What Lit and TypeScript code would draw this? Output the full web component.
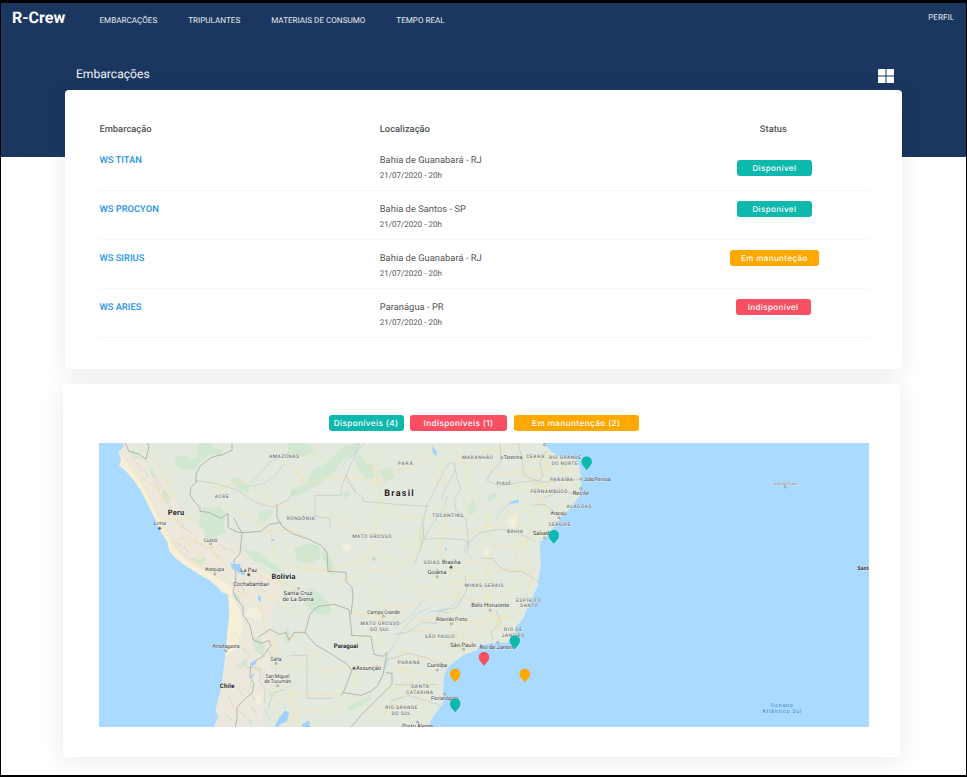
import { LitElement, html, svg, css } from "lit";
import { customElement } from "lit/decorators.js";

type Tone = "ok" | "warn" | "bad";

const NAV = ["EMBARCAÇÕES", "TRIPULANTES", "MATERIAIS DE CONSUMO", "TEMPO REAL"];

const SHIPS: { name: string; place: string; status: string; tone: Tone }[] = [
  { name: "WS TITAN", place: "Bahia de Guanabará - RJ", status: "Disponível", tone: "ok" },
  { name: "WS PROCYON", place: "Bahia de Santos - SP", status: "Disponível", tone: "ok" },
  { name: "WS SIRIUS", place: "Bahia de Guanabará - RJ", status: "Em manunteção", tone: "warn" },
  { name: "WS ARIES", place: "Paranágua - PR", status: "Indisponível", tone: "bad" },
];

const LAND =
  "M122.3 442L124.3 446L118.3 451.7L121 458.3L119.3 465L126.7 471.7L134.3 480.7L141.7 491.7L150 508.3L156.7 521.7L160 530L167.7 541.7L169 550L175 557.3L185 565L198.3 573.3L210 580L218 587L222 592L228.3 594L229.3 615L226.7 638L225.7 651.7L223.3 671.7L221 688.3L217.7 700L215.7 710L218.3 716.7L213.3 728H427.3L433.3 716.7L441.7 705L444.3 698.3L443.5 690L444 676.7L448.3 666.7L455 661L463.3 655L470 652.5L476.7 650L480 645L494 642.5L506.7 642.3L515 635L516 626.7L523.3 618.3L530 601.7L538.3 585L538.3 581.7L541 565L540 541.7L545 538.3L551.7 530L560 518.3L570 508.3L580 495L581.7 483.3L580 468.3L576.7 457.7L561.7 456.7L551.7 451.7L543.3 442Z";

const ANDES =
  "M118 442H127L139 458L156 472L170 490L178 505L187 520L202 530L222 537L238 546L244 560L262 570L278 581L284 592L273 606L270 622L276 640L270 660L274 680L262 700L264 728H200V580L150 560L110 470Z";

const COAST_STRIP =
  "M120 453L121 459L119.3 465L126.7 471.7L134.3 480.7L141.7 491.7L150 508.3L160 530L167.7 541.7L169 550L175 557.3L198.3 573.3L218 587L228.3 594L229.3 615L226.7 638L225.7 655L234 650L240 640L243 622L238 606L234 590L222 580L203 569L184 559L175 546L168 532L160 518L151 501L142 482L130 466Z";

const FORESTS = [
  "M175 457l10-3 6 5 8-4 3 6-7 8-12 1-8-6z",
  "M198 442l12 0 4 6 9 1-3 6-10-1-6 5-8-6z",
  "M203 506l9 3 7-4 6 7-1 12 2 8-8 3-4 5-9-3-1-8-6-5z",
  "M165 489l4 6 1 9-5-2-4-6z",
  "M240 545l8 5 10 2 10 8 8 4 6 8-8-1-9-7-10-3-7-7z",
  "M230 478l8-2 5 6 8 2-3 8-7-2-6-4z",
  "M260 512l9-4 5 4-8 8-8 2z",
  "M288 442l22 2 4 7-12 5-14-4z",
  "M290 490l14-6 9-14 14-8 17-16 15-4-2 9-14 8-8 12-18 14-16 9-10 2z",
  "M354 457l6-4 5 9 8 2 2 12-8 3-7-7z",
  "M379 470l12-4 4 10-10 6z",
  "M294 548l13-5 12 2 1 13-10 5-13-2z",
  "M325 545l3 8 5 9 0 12-4-2-4-10-4-8z",
  "M309 587l11 6 8 9 4 10-10 3-9-5-10-6z",
  "M346 707l17-8 9-6-2 6-11 8-10 4z",
  "M421 520l3 3 0 16-4 6-1-9z",
  "M468 505l5-6 4 8-5 8-5-3z",
  "M487 496l8-4 3 4-9 7z",
  "M233 591l6 5 2 8-5-3-4-5z",
  "M252 637l8 1 5 7-1 11-7-3-4-8z",
  "M239 664l6-6 2 7-5 3z",
  "M284 641l2-14 4 4-1 10z",
  "M248 718l6 3-4 6z",
  "M152 466l4 10-3 2-4-7z",
  "M196 562l8-6 3 3-6 7z",
  "M250 680l3 5-3 4z",
  "M340 495l8-5 4 3-6 5z",
  "M130 452l8 2 2 5-7-2z",
];

const ARID = [
  "M247 610l8-3 6 4 0 6-8 1-8-3z",
  "M508 518l7-4 4 6-5 8-6-3z",
  "M256 694l5-1 1 9-6 1z",
  "M341 545l8-3 3 4-6 6z",
  "M486 546l4 4-3 7-4-5z",
];

const LAKES = [
  "M230 562l5 2 5-1 1 6 5 4-3 2-6-4-5-3z",
  "M258 594l3 3 0 5-3-3z",
  "M252 661l5-2-1 4-4 3z",
  "M251 675l4-3-3 6z",
  "M275 725l5-9 5-6 4 2-2 9-7 3-3 4z",
  "M432 445l4 5 1 5-4-2z",
  "M508 503l6-3 5-1 0 3-6 1z",
  "M271 538l4 1-3 2z",
  "M372 557l4 1-2 3z",
  "M445 546l2 3-2 2z",
  "M302 724l7-4 1 7-8 1z",
];

const RIVERS = [
  "M342 466l6-8 7-4 10-12M345 480l8 6 3 8",
  "M447 496l-3 12-8 10-12 20M455 470l-10 20-4 10",
  "M385 670l4-17 10-18 10-13 10-10 12-5",
  "M252 486l12-3 12-8 8-12M290 452l-20 10-18 20",
  "M514 501l-12 8-6 10M468 540l-4 10 8 8",
  "M428 612l20-4 15-11M395 628l16-13 12-14",
];

const NATIONAL = [
  "M125 442l4 9 9 2 8 6 3-13-2-4",
  "M232 442v8l-9 4-12 3-11 9-4 8 0 8-5 5-1 7 5 8 5 5 0 4 9 1 12 6 7-5 0 14 10 5h9l14-1 8-7 12-2",
  "M234 518l8 15-2 20-6 7 2 15-1 9-2 7 4 8 6 7 0 8 7 11 3 14 8 4 8-3 2 5-8 11-12 7-1 13 4 8-2 9-8 6-7 8 0 12-4 16",
  "M258 637l12-8 10 5 6-2 3 8 5-8 11 0",
  "M277 505l0 12 5 9 10 7 17 6 12 6 6 7 1 19 18 1 0 9 6 6 1 10-2 17",
  "M305 632l5-18 8-8 16-2 15 5 3 26",
  "M351 635l20 1 3 18 9 2 4-4-4 22-5 11-7 6-10 4-18-3",
  "M305 632l10 12 17 10 14 9 6 7-5 13-4 10-2 2",
  "M386 672l6 1 0 11-10 10-9 9-12 12-10 12",
];

const STATES = [
  "M195 480l21 3 22 7 18 12 16 5 15-7 8-10",
  "M346 475l-4 11-1 9-13 0h-13v21l15 2 0 10",
  "M346 475l7 14 10 8 0 4 35 3 29 2",
  "M346 475l14-32",
  "M427 505l10-20 7-15 6-8 6 1",
  "M454 463l3 15 4 10-7 12 2 10 10 9 2 14 0 14",
  "M425 539l16-1 20 1 8 2M427 505l-4 17 1 16-6 17-3 8",
  "M467 550l4-10 9-8 20-3 15 2 21 10",
  "M500 442l1 20-9 8-5 10 12 6 20-4 18-2",
  "M518 443l4 14 2 18 18 7 20-2 18-1",
  "M547 450l-7 12 3 14-8 8M545 497l16-6 19 3M533 505l11-1 17 12",
  "M481 558l12 0 6 8 10 5 13 0 17 11",
  "M395 634l15-3 12-9 14 1 4-12 10 2",
  "M386 660l22-7 21 5 14 10M395 684l24 1 18-1",
  "M390 701l18-6 22 6 10 4",
  "M496 610l5 12-10 10 2 8M437 611l20-4 10-18-2-13",
  "M246 667l8 0 8 3-3 10 6 8 0 14M268 708l5-15 12-4M290 655l17 0v43l25 0",
];

const HIGHWAYS = [
  "M134 459l9 19 17 14 11 19 10 18 8 16 18 18 16 11 8 9M128 465l15 19 12 23 9 21 11 19 18 14 24 16",
  "M140 449l16 11 10 19 6 21M149 483l12 4 12-5M156 502l18-7M163 518l14 2 15-2M174 538l21 2 14 6 14 16",
  "M210 543l7 14 13 12M203 550l-5 12M190 546l9-12",
  "M221 489l19-8 17 8 18 15 20 2M209 482l11 8 9 19",
  "M238 512l18 9 14 10 4 24 10 10 23 4 17 2 24-7",
  "M270 531l20-2 19 9M246 572l12 2 13 7 17 3 12 8 8 14",
  "M248 573l6 14 9 8 12 4 18 14M236 590l17 9 10 13 1 14 9 12 3 30-2 20 5 28",
  "M224 640l12-8 6 12 11 10 7 14-13 11M221 690l16-7 10 8M226 704l11 7-6 11",
  "M276 668l16-7 14 6 13-9M278 682l12 7 2 17 9 21M279 700l20-8 22 3 23-3M286 722l21-13 20 4 19-12",
  "M294 470l12 14 28-8 13 2 19 1 12 5 12-12 24-6 16-14",
  "M360 455l17 18 5 30-4 16-4 28-16 10M378 484l-2-18 8-15M330 512l25 16 18 9",
  "M350 563l17-5 17-2 16 8 15-9 8-13-2-17M355 578l18-9 20 3 17 14 15 3",
  "M434 445l4 19 7 17-2 18 4 17-7 19 1 19 10 15M441 535l17-8 12 10 11-11 17 2 9-17",
  "M450 442l9 15 15 3 12-11 15 2 13-8M461 457l7 21-5 18 5 19M487 451l3 18 15 6 9-5 17 5 15-10",
  "M522 457l16 3 16-4 13 8M525 467l11 5 13-5 13 4 14-2M526 476l15 11 17-7 19 1M510 482l15 8 18-3 20 5 15 2",
  "M544 453l4 14-7 13 5 10-4 11 6 14M560 458l3 17-4 17M532 482l5 16 10 15 7 12",
  "M523 499l8 18 9 9 4 12M507 508l11 14 16 11 9 9M489 509l-3 21 8 14 16 3 20-8",
  "M518 521l3 22-6 13 5 18-7 14-8 17-10 10M528 538l-3 18 7 14-4 22-13 22",
  "M485 546l6 12-5 13 7 13-3 15M466 560l12 2 11 10 20-4 22 5",
  "M452 566l-2 13 9 11-3 13 5 19-4 13 4 15M452 570l16 5 12 9 8 16 3 16 13 13",
  "M437 569l-5 13-10 12-8 11-12 2-10 14M443 585l16-3 15-7M427 594l18 4 13-3 13 5 18-2 13-7",
  "M385 604l13 4 11 10 16 3 12-4 12 7 14-5 18 5 12-7 14-1M367 584l14 13 4 13-8 17-16 9",
  "M384 614l-21 1-15-6M384 614l-6 19 7 21M402 623l13 9 11-3 14 12 20 7",
  "M446 619l8 12 8 20M469 616l-6 18 3 14M481 610l-3 18-14 19M492 611l9 16 3 14M512 615l-15 7-11 15",
  "M391 658l16-8 10 8 13-3 15 10M390 673l15-5 15 8 17-7M401 650l2 19 11 13 1 14 11 12",
  "M387 690l13-5 15 5 12-8 15 5M392 704l19 3 12 8M371 706l15 4 14-4 12 16M381 722l7-16 17-13",
  "M355 668l13-5 15 3M352 673l2 12M319 673l22-5 9 0M303 646l16 8M305 632l-17 8",
  "M304 552l7 16 17 3M291 450l17 8 13-12M306 484l-9-14-14-10",
  "M336 584l14-6M433 482l11-5M406 545l19-5M408 515l16 4M391 503l9 13 9 3",
];

const RELIEF = [
  "M137 462l6 8M145 469l3 8M152 474l6 7M155 482l5 8M160 483l4 9M164 492l5 7M169 505l5 8M178 520l6 6M181 526l7 4M188 529l5 5",
  "M172 541l9 4M184 545l4 7M195 541l8 5M205 548l9-2M190 558l10 3M214 554l8 3M219 544l8 5M230 549l5 4M236 579l3 12",
  "M242 586l4 8M252 582l6 5M260 588l5 3M242 647l5 6M250 652l-3 9M236 663l5 6M256 665l4 8M265 670l-3 9M238 688l5 7M248 690l6 9M229 696l5 11",
  "M226 715l7 5M240 711l6 6M251 706l6 8M267 648l5 9M268 690l5 6M265 710l5 10",
];

interface Label {
  t: string;
  x: number;
  y: number;
  w: number;
  k: string;
}

/* x is the middle of the label, y its baseline and w its drawn width */
const LABELS: Label[] = [
  { t: "AMAZONAS", x: 284, y: 458, w: 30, k: "state" },
  { t: "ACRE", x: 221.8, y: 497.4, w: 14, k: "state" },
  { t: "RONDÔNIA", x: 300.8, y: 519.5, w: 28, k: "state" },
  { t: "PARÁ", x: 405.3, y: 464.3, w: 15, k: "state" },
  { t: "MARANHÃO", x: 477.5, y: 458.3, w: 31, k: "state" },
  { t: "CEARÁ", x: 535.2, y: 457.5, w: 18, k: "state" },
  { t: "RIO GRANDE", x: 565, y: 458.8, w: 32, k: "state" },
  { t: "DO NORTE", x: 564.5, y: 464.2, w: 26, k: "state" },
  { t: "PARAÍBA", x: 561.6, y: 480.6, w: 23, k: "state" },
  { t: "PIAUÍ", x: 503.5, y: 485, w: 14, k: "state" },
  { t: "PERNAMBUCO", x: 549, y: 492.5, w: 37, k: "state" },
  { t: "ALAGOAS", x: 579, y: 508, w: 25, k: "state" },
  { t: "SERGIPE", x: 559.6, y: 525.4, w: 22, k: "state" },
  { t: "BAHIA", x: 515, y: 532.5, w: 16, k: "state" },
  { t: "TOCANTINS", x: 447.8, y: 517, w: 31, k: "state" },
  { t: "MATO GROSSO", x: 371.8, y: 537.8, w: 39, k: "state" },
  { t: "GOIÁS", x: 431.5, y: 563.2, w: 16, k: "state" },
  { t: "MINAS GERAIS", x: 484, y: 586.4, w: 39, k: "state" },
  { t: "ESPÍRITO", x: 528.5, y: 601.4, w: 25, k: "state" },
  { t: "SANTO", x: 529, y: 607, w: 18, k: "state" },
  { t: "RIO DE", x: 513, y: 630.8, w: 18, k: "state" },
  { t: "JANEIRO", x: 513, y: 636.4, w: 23, k: "state" },
  { t: "MATO GROSSO", x: 380, y: 624.6, w: 39, k: "state" },
  { t: "DO SUL", x: 379.7, y: 630.2, w: 19, k: "state" },
  { t: "SÃO PAULO", x: 439.7, y: 638, w: 30, k: "state" },
  { t: "PARANÁ", x: 408.8, y: 664, w: 22, k: "state" },
  { t: "SANTA", x: 420, y: 688, w: 18, k: "state" },
  { t: "CATARINA", x: 419.5, y: 693.5, w: 27, k: "state" },
  { t: "RIO GRANDE", x: 401.3, y: 708.8, w: 32, k: "state" },
  { t: "DO SUL", x: 401, y: 714.4, w: 19, k: "state" },
  { t: "Lima", x: 159.7, y: 525, w: 12.5, k: "city" },
  { t: "Cusco", x: 210.5, y: 541.3, w: 13.5, k: "city" },
  { t: "Arequipa", x: 214.6, y: 571, w: 19, k: "city" },
  { t: "La Paz", x: 248.8, y: 571.2, w: 17, k: "town" },
  { t: "Cochabamba", x: 250, y: 586, w: 33.5, k: "town" },
  { t: "Santa Cruz", x: 298, y: 594.6, w: 29, k: "town" },
  { t: "de La Sierra", x: 298, y: 601, w: 31, k: "town" },
  { t: "Antofagasta", x: 226, y: 648, w: 27, k: "city" },
  { t: "Salta", x: 276, y: 660.8, w: 11, k: "city" },
  { t: "San Miguel", x: 277.5, y: 677.2, w: 24, k: "city" },
  { t: "de Tucumán", x: 277.7, y: 683, w: 27, k: "city" },
  { t: "Campo Grande", x: 383.6, y: 613.4, w: 32.5, k: "city" },
  { t: "Ribeirão Preto", x: 451.5, y: 621, w: 31, k: "city" },
  { t: "Belo Horizonte", x: 490.3, y: 607, w: 38, k: "town" },
  { t: "Brasília", x: 451.2, y: 563.8, w: 18.5, k: "town" },
  { t: "Goiânia", x: 437, y: 573.6, w: 19, k: "town" },
  { t: "São Paulo", x: 463.2, y: 646.6, w: 26, k: "town" },
  { t: "Rio de Janeiro", x: 497.5, y: 648.4, w: 36, k: "town" },
  { t: "Curitiba", x: 437, y: 667, w: 20, k: "town" },
  { t: "Florianópolis", x: 445, y: 699.4, w: 28, k: "city" },
  { t: "Assunção", x: 368.6, y: 670, w: 25, k: "town" },
  { t: "Porto Alegre", x: 417.5, y: 728, w: 31, k: "town" },
  { t: "Teresina", x: 513, y: 458.9, w: 18.5, k: "city" },
  { t: "João Pessoa", x: 597, y: 480.2, w: 27, k: "city" },
  { t: "Recife", x: 580.8, y: 494.6, w: 16, k: "town" },
  { t: "Aracaju", x: 558.6, y: 515, w: 16, k: "city" },
  { t: "Salvador", x: 543.5, y: 535, w: 21, k: "town" },
  { t: "Georgetown", x: 785.5, y: 485, w: 24, k: "isle" },
  { t: "Santa", x: 864.3, y: 570, w: 13.5, k: "cut" },
  { t: "Peru", x: 176, y: 514.4, w: 16.5, k: "land" },
  { t: "Bolívia", x: 283.5, y: 579, w: 24, k: "land" },
  { t: "Paraguai", x: 346, y: 648, w: 24.5, k: "land small" },
  { t: "Chile", x: 227, y: 687.2, w: 14.5, k: "land small" },
  { t: "Brasil", x: 399, y: 495.6, w: 29.5, k: "land big" },
  { t: "Oceano", x: 781.8, y: 706.4, w: 22, k: "sea" },
  { t: "Atlântico Sul", x: 781.8, y: 712.6, w: 39, k: "sea" },
];

const DOTS: [number, number, boolean][] = [
  [159.6, 528, true], [248.7, 574.3, true], [451, 566.8, true], [354, 667.9, true],
  [210.5, 543.4, false], [214.8, 573.6, false], [268.3, 583.7, false], [298.5, 588, false],
  [226, 650.3, false], [276, 663, false], [277.7, 685.3, false], [383.5, 615.9, false],
  [451.5, 623.4, false], [490.3, 610, false], [437.3, 576.3, false], [463.6, 649, false],
  [497.8, 642, false], [437.3, 669.8, false], [444.6, 693.9, false], [417.5, 721.8, false],
  [502, 457.2, false], [581, 478.6, false], [580.7, 488.2, false], [559, 517.3, false],
  [544.5, 537.6, false], [544.5, 444.4, false], [785.3, 486.6, false],
];

const PINS: [number, number, Tone][] = [
  [586.7, 456, "ok"], [553.8, 529.7, "ok"], [514.8, 635, "ok"], [484, 651.7, "bad"],
  [455.2, 668.3, "warn"], [524.8, 668.3, "warn"], [455.2, 698.2, "ok"],
];

@customElement("fleet-map")
export class FleetMap extends LitElement {
  static styles = css`
    :host { display: block; }
    svg { display: block; width: 100%; height: 100%; background: #aadaff; font-family: Roboto, sans-serif; text-rendering: geometricPrecision; }
    .land-fill { fill: #e3e9dd; }
    .andes { fill: #ede8de; }
    .strip { fill: #f7f0d8; }
    .forest { fill: #cde6ce; opacity: 0.8; }
    .arid { fill: #f3efdf; }
    .lake { fill: #9dd2fb; }
    path.line { fill: none; stroke-linejoin: round; stroke-linecap: round; }
    .river { stroke: #a9d4ec; stroke-width: 0.6; }
    .road { stroke: #f5e2a6; stroke-width: 0.75; }
    .relief { stroke: #d5d6c9; stroke-width: 1.3; opacity: 0.6; }
    .nation { stroke: #a4a8a2; stroke-width: 0.8; }
    .region { stroke: #b9bfb8; stroke-width: 0.55; stroke-dasharray: 1.6 0.8; }
    text { text-anchor: middle; paint-order: stroke; stroke: #fff; stroke-opacity: 0.55; stroke-width: 0.8px; }
    .state { font-size: 4.9px; fill: #6f7375; font-weight: 500; }
    .city { font-size: 5.2px; fill: #3c3c3c; }
    .town { font-size: 5.9px; fill: #333; }
    .isle { font-size: 4.8px; fill: #777c80; }
    .cut { font-size: 5.2px; fill: #222; font-weight: 700; }
    .land { font-size: 7.4px; fill: #222; font-weight: 700; }
    .land.small { font-size: 6.2px; }
    .land.big { font-size: 9px; }
    .sea { font-size: 5.2px; fill: #4382cc; stroke: none; }
    .dot { fill: #fff; stroke: #666; stroke-width: 0.6; }
    .dot.full { fill: #555; }
    .ok { fill: #0fb8ad; }
    .warn { fill: #ffa800; }
    .bad { fill: #f94f63; }
  `;

  private lines(kind: string, list: string[]) {
    return list.map((d) => svg`<path class="line ${kind}" d=${d} />`);
  }

  render() {
    return html`<svg viewBox="99 442.6 769.6 284.8" preserveAspectRatio="none">
      <defs><clipPath id="shore"><path d=${LAND} /></clipPath></defs>
      <g clip-path="url(#shore)">
        <path class="land-fill" d=${LAND} />
        <path class="andes" d=${ANDES} />
        <path class="strip" d=${COAST_STRIP} />
        ${FORESTS.map((d) => svg`<path class="forest" d=${d} />`)}
        ${ARID.map((d) => svg`<path class="arid" d=${d} />`)}
        ${this.lines("relief", RELIEF)} ${this.lines("river", RIVERS)}
        ${this.lines("road", HIGHWAYS)} ${this.lines("region", STATES)}
        ${this.lines("nation", NATIONAL)}
        ${LAKES.map((d) => svg`<path class="lake" d=${d} />`)}
      </g>
      ${DOTS.map(([x, y, full]) => svg`<circle class="dot ${full ? "full" : ""}" cx=${x} cy=${y} r=${full ? 1.2 : 0.95} />`)}
      ${LABELS.map((l) => svg`<text class=${l.k} x=${l.x} y=${l.y} textLength=${l.w}>${l.t}</text>`)}
      ${PINS.map(
        ([x, y, tone]) => svg`<path class=${tone} transform="translate(${x} ${y})"
          d="M0 0C3.1 0 5.2 2.2 5.2 5.1C5.2 8.6 2.2 10.6 0 13.6C-2.2 10.6-5.2 8.6-5.2 5.1C-5.2 2.2-3.1 0 0 0Z" />`
      )}
    </svg>`;
  }
}

@customElement("app-root")
export class AppRoot extends LitElement {
  static styles = css`
    :host {
      display: block;
      box-sizing: border-box;
      width: 967px;
      height: 777px;
      overflow: hidden;
      border: solid #000;
      border-width: 3px 1px 2px;
      background: linear-gradient(#1b3760 153.7px, #fff 153.7px);
      font-family: Roboto, sans-serif;
      text-rendering: geometricPrecision;
      color: #555;
    }
    .bar { display: flex; height: 33px; box-sizing: border-box; color: #e8ecf2; font-size: 8.1px; line-height: 12px; white-space: nowrap; }
    .brand { width: 87.5px; padding: 6px 0 0 11px; font-size: 16px; line-height: 18px; font-weight: 700; color: #fff; }
    nav { display: flex; gap: 31px; padding-top: 11px; flex: 1; }
    .profile { padding: 8px 12px 0 0; }
    .title { display: flex; justify-content: space-between; margin: 0 72.5px 0 75px; height: 53.7px; box-sizing: border-box; padding-top: 30px; }
    h1 { margin: 0; font-size: 12.1px; line-height: 16px; font-weight: 400; color: #f2f4f8; }
    .grid { width: 16px; height: 14px; margin-top: 3px; fill: #fff; }
    .card { box-sizing: border-box; width: 836.2px; background: #fff; border-radius: 4px; box-shadow: 0 3px 24px rgba(0, 0, 0, 0.09); }
    .list { height: 279.4px; margin-left: 64.4px; padding: 28.3px 33px 0 34px; }
    .row { display: grid; grid-template-columns: 280.4px 300.6px 188px; box-sizing: border-box; height: 49px; border-bottom: 1px solid #f6f6f6; }
    .head { height: 24px; border: 0; font-size: 9.4px; line-height: 24px; font-weight: 500; }
    .head .status { padding-right: 2px; }
    .status { text-align: center; }
    .name { color: #1e93ea; font-size: 9.4px; line-height: 12px; font-weight: 500; padding-top: 13px; }
    .place { font-size: 9.4px; line-height: 12px; padding-top: 13px; }
    .date { font-size: 8px; line-height: 12px; padding-top: 3px; }
    .row .status { padding-top: 10px; }
    .row.head .status { padding-top: 0; }
    .row.lead .status { padding-top: 17.6px; }
    .tag { display: inline-block; box-sizing: border-box; width: 75px; height: 16px; border-radius: 3px; font: 500 8px/17px Inter, sans-serif; letter-spacing: 0.4px; color: #fff; vertical-align: top; text-align: center; white-space: nowrap; }
    .ok { background: #0fb8ad; }
    .warn { background: #ffa800; }
    .bad { background: #f94f63; }
    .row .tag.warn { width: 89px; }
    .row .tag.bad { margin-right: 2.5px; }
    .overview { height: 373px; margin: 14.6px 0 0 62.4px; padding: 31px 31px 0 35.6px; }
    .legend { display: flex; justify-content: center; gap: 6.5px; height: 28px; }
    .legend .tag { font-size: 8.2px; line-height: 17.4px; }
    .legend .bad { width: 97px; }
    .legend .warn { width: 125.5px; }
    fleet-map { width: 769.6px; height: 284.8px; }
  `;

  render() {
    return html`
      <header class="bar">
        <div class="brand">R-Crew</div>
        <nav>${NAV.map((n) => html`<span>${n}</span>`)}</nav>
        <span class="profile">PERFIL</span>
      </header>
      <div class="title">
        <h1>Embarcações</h1>
        <svg class="grid" viewBox="0 0 16 14">
          <rect width="7.5" height="6.5" rx=".6" /><rect x="8.5" width="7.5" height="6.5" rx=".6" />
          <rect y="7.5" width="7.5" height="6.5" rx=".6" /><rect x="8.5" y="7.5" width="7.5" height="6.5" rx=".6" />
        </svg>
      </div>
      <section class="card list">
        <div class="row head"><span>Embarcação</span><span>Localização</span><span class="status">Status</span></div>
        ${SHIPS.map(
          (s, i) => html`<div class="row ${i === 0 ? "lead" : ""}">
            <div class="name">${s.name}</div>
            <div><div class="place">${s.place}</div><div class="date">21/07/2020 - 20h</div></div>
            <div class="status"><span class="tag ${s.tone}">${s.status}</span></div>
          </div>`
        )}
      </section>
      <section class="card overview">
        <div class="legend">
          <span class="tag ok">Disponíveis (4)</span>
          <span class="tag bad">Indisponíveis (1)</span>
          <span class="tag warn">Em manuntenção (2)</span>
        </div>
        <fleet-map></fleet-map>
      </section>
    `;
  }
}
